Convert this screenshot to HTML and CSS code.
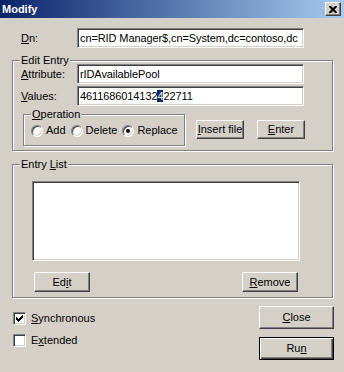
FILE: index.html
```html
<!DOCTYPE html>
<html>
<head>
<meta charset="utf-8">
<link rel="stylesheet" href="styles.css">
</head>
<body>
<div class="window">
  <div class="titlebar">
    <span class="title">Modify</span>
    <span class="close-btn">
      <svg width="8" height="7" viewBox="0 0 8 7"><path d="M0 0h2l2 2 2-2h2v1l-2.5 2.5L8 6v1H6L4 5 2 7H0V6l2.5-2.5L0 1z" fill="#000"/></svg>
    </span>
  </div>
  <div class="content">
    <div class="field-row dn-row">
      <span class="field-label"><u>D</u>n:</span>
      <div class="textbox">cn=RID Manager$,cn=System,dc=contoso,dc</div>
    </div>

    <div class="group edit-entry">
      <span class="group-label">Edit Entry</span>
      <div class="field-row">
        <span class="field-label"><u>A</u>ttribute:</span>
        <div class="textbox">rIDAvailablePool</div>
      </div>
      <div class="field-row values-row">
        <span class="field-label"><u>V</u>alues:</span>
        <div class="textbox">4611686014132<span class="sel">4</span>22711</div>
      </div>
      <div class="op-row">
        <div class="group operation">
          <span class="group-label"><u>O</u>peration</span>
          <span class="radio-item"><span class="radio"></span>Add</span>
          <span class="radio-item"><span class="radio"></span>Delete</span>
          <span class="radio-item"><span class="radio checked"></span>Replace</span>
        </div>
        <button class="btn op-btn insert-btn"><span><u>I</u>nsert file</span></button>
        <button class="btn op-btn enter-btn"><span><u>E</u>nter</span></button>
      </div>
    </div>

    <div class="group entry-list">
      <span class="group-label">Entry <u>L</u>ist</span>
      <div class="listbox"></div>
      <div class="list-buttons">
        <button class="btn list-btn"><span>Ed<u>i</u>t</span></button>
        <button class="btn list-btn"><span><u>R</u>emove</span></button>
      </div>
    </div>

    <div class="bottom">
      <div class="checks">
        <div class="check-item">
          <span class="checkbox">
            <svg width="7" height="7" viewBox="0 0 7 7" shape-rendering="crispEdges" fill="#000">
              <rect x="6" y="0" width="1" height="1"/>
              <rect x="5" y="1" width="2" height="1"/>
              <rect x="0" y="2" width="1" height="1"/>
              <rect x="4" y="2" width="3" height="1"/>
              <rect x="0" y="3" width="2" height="1"/>
              <rect x="3" y="3" width="3" height="1"/>
              <rect x="0" y="4" width="5" height="1"/>
              <rect x="1" y="5" width="3" height="1"/>
              <rect x="2" y="6" width="1" height="1"/>
            </svg>
          </span>
          <span><u>S</u>ynchronous</span>
        </div>
        <div class="check-item">
          <span class="checkbox"></span>
          <span>E<u>x</u>tended</span>
        </div>
      </div>
      <div class="dialog-buttons">
        <button class="btn dlg-btn"><span><u>C</u>lose</span></button>
        <button class="btn dlg-btn default"><span>Ru<u>n</u></span></button>
      </div>
    </div>
  </div>
</div>
</body>
</html>
```

FILE: styles.css
```css
* { box-sizing: border-box; }
html, body { margin: 0; padding: 0; }
body {
  width: 344px;
  height: 372px;
  overflow: hidden;
  background: #d4d0c8;
  font-family: "Liberation Sans", Arial, sans-serif;
  font-size: 11px;
  line-height: 13px;
  color: #000;
}
u { text-decoration: underline; text-underline-offset: 1px; }

.window {
  width: 344px;
  height: 372px;
  display: flex;
  flex-direction: column;
}

.titlebar {
  height: 18px;
  flex: none;
  display: flex;
  align-items: center;
  justify-content: space-between;
  padding: 0 3px 0 2px;
  background: linear-gradient(to right, #0a246a, #a6caf0);
}
.title {
  color: #fff;
  font-weight: bold;
  font-size: 11px;
}
.close-btn {
  width: 16px;
  height: 14px;
  background: #d4d0c8;
  border: 1px solid;
  border-color: #fff #404040 #404040 #fff;
  box-shadow: inset -1px -1px #808080;
  display: flex;
  align-items: center;
  justify-content: center;
}
.close-btn svg { display: block; }

.content {
  padding: 10px 11px 0 12px;
}

.field-row {
  display: flex;
  align-items: center;
}
.field-label { width: 56px; flex: none; }
.dn-row { padding-left: 9px; }

.textbox {
  width: 227px;
  height: 20px;
  background: #fff;
  border: 1px solid;
  border-color: #808080 #fff #fff #808080;
  box-shadow: inset 1px 1px #404040, inset -1px -1px #d4d0c8;
  padding: 0 2px;
  line-height: 18px;
  letter-spacing: -0.1px;
  white-space: nowrap;
  overflow: hidden;
}
.sel { background: #0a246a; color: #fff; }

.group {
  position: relative;
  border: 1px solid #808080;
  box-shadow: 1px 1px 0 #fff, inset 1px 1px 0 #fff;
}
.group-label {
  position: absolute;
  top: -7px;
  left: 7px;
  padding: 0 1px;
  background: #d4d0c8;
  line-height: 13px;
  white-space: nowrap;
}

.edit-entry {
  margin-top: 12px;
  padding: 3px 0 4px 0;
}
.edit-entry .field-row { padding-left: 8px; }
.edit-entry .values-row { margin-top: 2px; }

.op-row {
  display: flex;
  align-items: flex-start;
  margin-top: 8px;
  padding-left: 10px;
}
.operation {
  width: 162px;
  height: 32px;
  display: flex;
  align-items: center;
  padding: 1px 0 0 7px;
}
.radio-item {
  display: flex;
  align-items: center;
  gap: 3px;
  margin-right: 5px;
  white-space: nowrap;
}
.radio {
  width: 12px;
  height: 12px;
  border-radius: 50%;
  background: #fff;
  border: 1px solid;
  border-color: #808080 #fff #fff #808080;
  box-shadow: inset 1px 1px #404040, inset -1px -1px #d4d0c8;
  display: flex;
  align-items: center;
  justify-content: center;
  flex: none;
}
.radio.checked::after {
  content: "";
  width: 4px;
  height: 4px;
  border-radius: 50%;
  background: #000;
}

.btn {
  background: #d4d0c8;
  border: 1px solid;
  border-color: #fff #404040 #404040 #fff;
  box-shadow: inset -1px -1px #808080;
  display: flex;
  align-items: center;
  justify-content: center;
  font: inherit;
  color: #000;
  padding: 0;
  margin: 0;
}
.btn.default {
  border: 1px solid #000;
  box-shadow: inset 1px 1px #fff, inset -1px -1px #404040, inset -2px -2px #808080;
}
.op-btn {
  width: 48px;
  height: 19px;
  margin-top: 6px;
}
.insert-btn { margin-left: 11px; }
.enter-btn { margin-left: 13px; }

.entry-list {
  margin-top: 13px;
  padding: 16px 34px 5px 21px;
}
.listbox {
  width: 268px;
  height: 80px;
  margin-left: -2px;
  background: #fff;
  border: 1px solid;
  border-color: #808080 #fff #fff #808080;
  box-shadow: inset 1px 1px #404040, inset -1px -1px #d4d0c8;
}
.list-buttons {
  display: flex;
  justify-content: space-between;
  margin-top: 11px;
}
.list-btn { width: 56px; height: 20px; }

.bottom {
  display: flex;
  justify-content: space-between;
  margin-top: 8px;
}
.checks {
  display: flex;
  flex-direction: column;
  gap: 9px;
  padding: 6px 0 0 1px;
}
.check-item {
  display: flex;
  align-items: center;
  gap: 5px;
  height: 13px;
}
.checkbox {
  width: 13px;
  height: 13px;
  background: #fff;
  border: 1px solid;
  border-color: #808080 #fff #fff #808080;
  box-shadow: inset 1px 1px #404040, inset -1px -1px #d4d0c8;
  display: flex;
  align-items: center;
  justify-content: center;
  flex: none;
}
.checkbox svg { display: block; }
.dialog-buttons {
  display: flex;
  flex-direction: column;
  gap: 8px;
  margin-right: -1px;
}
.dlg-btn { width: 75px; height: 23px; }
```
